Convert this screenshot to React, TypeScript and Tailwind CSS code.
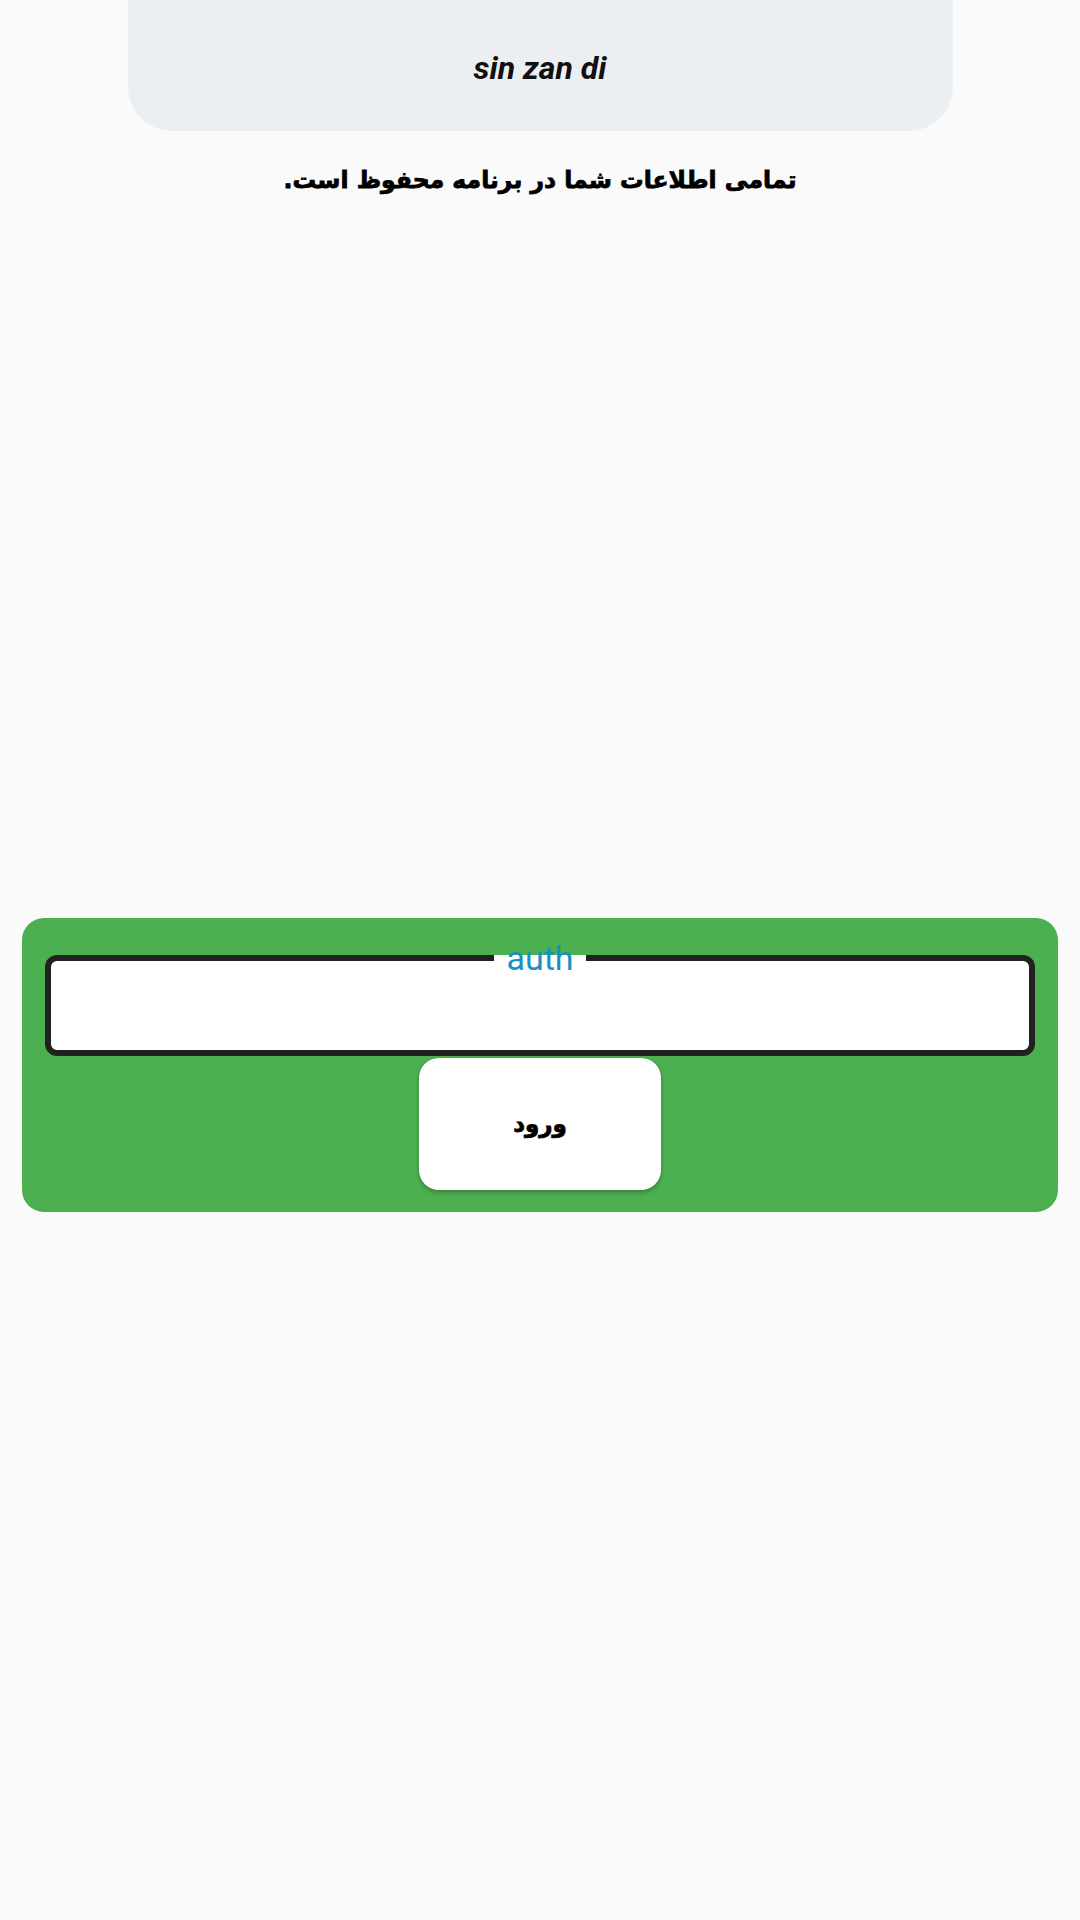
import React from "react";

export default function App() {
  return (
    <div className="min-h-[1920px] w-full bg-[#fafafa] flex flex-col items-center">
      <div className="w-[825px] h-[131px] bg-[#eceff1] rounded-b-[44px] flex items-center justify-center pt-[4px]">
        <span className="text-[32px] font-bold italic text-[#111] [font-family:Roboto,sans-serif] leading-none">
          sin zan di
        </span>
      </div>
      <div
        dir="rtl"
        className="mt-[38px] h-[24px] text-[23.5px] font-bold text-black leading-none [font-family:'DejaVu_Sans',sans-serif] [-webkit-text-stroke:0.8px_black]"
      >
        تمامی اطلاعات شما در برنامه محفوظ است.
      </div>
      <div className="mt-[725px] w-[1036px] bg-[#4caf50] rounded-[22px] px-[23px] pt-[37px] pb-[22px] flex flex-col items-center">
        <div className="relative w-full h-[101px] bg-white border-[6px] border-[#212121] rounded-[12px]">
          <div className="absolute left-1/2 -translate-x-1/2 top-[-6px] h-[16px] w-[92px] bg-white" />
          <span className="absolute left-1/2 -translate-x-1/2 top-[-20px] text-[34px] text-[#1a8fc4] [font-family:Roboto,sans-serif] leading-none">
            auth
          </span>
        </div>
        <button className="mt-[2px] w-[242px] h-[132px] bg-white rounded-[20px] shadow-[0_2px_4px_rgba(0,0,0,0.3)] flex items-center justify-center">
          <span dir="rtl" className="text-[23px] font-bold text-black [font-family:'DejaVu_Sans',sans-serif] leading-none [-webkit-text-stroke:0.8px_black]">
            ورود
          </span>
        </button>
      </div>
    </div>
  );
}
